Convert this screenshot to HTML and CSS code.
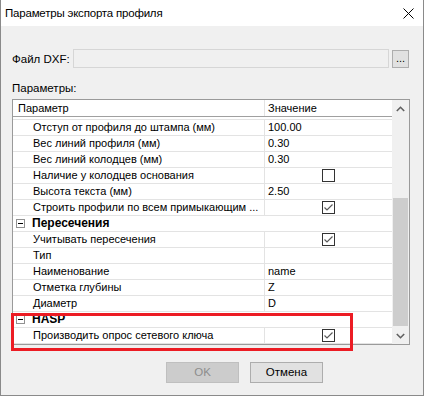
FILE: index.html
```html
<!DOCTYPE html>
<html>
<head>
<meta charset="utf-8">
<link rel="stylesheet" href="styles.css">
</head>
<body>
<div class="window">
  <div class="titlebar">
    <span class="title">Параметры экспорта профиля</span>
    <svg class="close" width="11" height="11" viewBox="0 0 11 11"><path d="M0.5 0.5 L10.5 10.5 M10.5 0.5 L0.5 10.5" stroke="#000" stroke-width="1" fill="none"/></svg>
  </div>
  <div class="content">
    <div class="file-row">
      <span class="file-label">Файл DXF:</span>
      <div class="file-input"></div>
      <div class="browse">...</div>
    </div>
    <div class="params-label">Параметры:</div>
    <div class="grid">
      <div class="grid-main">
        <div class="hdr">
          <div class="hdr-name">Параметр</div>
          <div class="hdr-val">Значение</div>
        </div>
        <div class="row"><div class="name">Отступ от профиля до штампа (мм)</div><div class="val">100.00</div></div>
        <div class="row"><div class="name">Вес линий профиля (мм)</div><div class="val">0.30</div></div>
        <div class="row"><div class="name">Вес линий колодцев (мм)</div><div class="val">0.30</div></div>
        <div class="row"><div class="name">Наличие у колодцев основания</div><div class="val center"><span class="cb"></span></div></div>
        <div class="row"><div class="name">Высота текста (мм)</div><div class="val">2.50</div></div>
        <div class="row"><div class="name">Строить профили по всем примыкающим ...</div><div class="val center"><span class="cb"><svg width="11" height="11" viewBox="0 0 11 11"><path d="M1.5 5.5 L4 8 L9.5 2.5" stroke="#5a5a5a" stroke-width="1.2" fill="none"/></svg></span></div></div>
        <div class="row cat"><span class="minus"></span><span class="cat-name">Пересечения</span></div>
        <div class="row"><div class="name">Учитывать пересечения</div><div class="val center"><span class="cb"><svg width="11" height="11" viewBox="0 0 11 11"><path d="M1.5 5.5 L4 8 L9.5 2.5" stroke="#5a5a5a" stroke-width="1.2" fill="none"/></svg></span></div></div>
        <div class="row"><div class="name">Тип</div><div class="val"></div></div>
        <div class="row"><div class="name">Наименование</div><div class="val">name</div></div>
        <div class="row"><div class="name">Отметка глубины</div><div class="val">Z</div></div>
        <div class="row"><div class="name">Диаметр</div><div class="val">D</div></div>
        <div class="row cat"><span class="minus"></span><span class="cat-name">HASP</span></div>
        <div class="row last"><div class="name">Производить опрос сетевого ключа</div><div class="val center"><span class="cb"><svg width="11" height="11" viewBox="0 0 11 11"><path d="M1.5 5.5 L4 8 L9.5 2.5" stroke="#5a5a5a" stroke-width="1.2" fill="none"/></svg></span></div></div>
      </div>
      <div class="vscroll">
        <div class="arrow"><svg width="9" height="6" viewBox="0 0 9 6"><path d="M0.8 5 L4.5 1.3 L8.2 5" stroke="#606060" stroke-width="1.6" fill="none"/></svg></div>
        <div class="track-top"></div>
        <div class="thumb"></div>
        <div class="track-rest"></div>
        <div class="arrow"><svg width="9" height="6" viewBox="0 0 9 6"><path d="M0.8 1 L4.5 4.7 L8.2 1" stroke="#606060" stroke-width="1.6" fill="none"/></svg></div>
      </div>
    </div>
    <div class="buttons">
      <div class="btn disabled">OK</div>
      <div class="btn">Отмена</div>
    </div>
  </div>
  <div class="highlight"></div>
</div>
</body>
</html>
```
FILE: styles.css
```css
* { box-sizing: border-box; }
html, body { margin: 0; padding: 0; }
body {
  font-family: "Liberation Sans", Arial, sans-serif;
  font-size: 11px;
  color: #000;
  background: #f0f0f0;
}
.window {
  position: relative;
  width: 424px;
  height: 396px;
  background: #f0f0f0;
  border-left: 1px solid #8a8a8a;
  border-right: 1px solid #8a8a8a;
  border-bottom: 1px solid #8a8a8a;
}
.titlebar {
  height: 26px;
  background: #fff;
  display: flex;
  align-items: center;
  padding-left: 4px;
}
.title { font-size: 11.5px; letter-spacing: -0.2px; }
.close { margin-left: auto; margin-right: 9px; margin-top: 1px; }
.content { padding-left: 11px; }
.file-row {
  margin-top: 23px;
  display: flex;
  align-items: center;
  height: 19px;
}
.file-label { width: 61px; font-size: 11.5px; }
.file-input {
  width: 316px;
  height: 19px;
  border: 1px solid #d6d6d6;
  background: #f0f0f0;
}
.browse {
  margin-left: 3px;
  width: 17px;
  height: 18px;
  margin-top: 1px;
  border: 1px solid #adadad;
  background: #e1e1e1;
  font-size: 11px;
  line-height: 14px;
  text-align: center;
}
.params-label {
  margin-top: 13px;
  height: 14px;
  line-height: 14px;
  font-size: 11.5px;
}
.grid {
  margin-top: 4px;
  width: 398px;
  height: 246px;
  border: 1px solid #9a9a9a;
  display: flex;
  background: #fff;
}
.grid-main { width: 379px; background: #fff; }
.hdr {
  height: 17px;
  border-bottom: 1px solid #a0a0a0;
  margin-bottom: 2px;
  display: flex;
  line-height: 16px;
}
.hdr-name { width: 252px; padding-left: 5px; border-right: 1px solid #e3e3e3; }
.hdr-val { padding-left: 3px; }
.row {
  height: 16px;
  border-top: 1px solid #e3e3e3;
  display: flex;
  line-height: 15px;
  white-space: nowrap;
}
.row.last { height: 17px; border-bottom: 1px solid #e3e3e3; }
.name {
  width: 252px;
  padding-left: 20px;
  border-right: 1px solid #e3e3e3;
  overflow: hidden;
}
.val { flex: 1; padding-left: 3px; }
.val.center { display: flex; justify-content: center; align-items: center; padding-left: 0; padding-right: 1px; }
.cb {
  width: 13px;
  height: 13px;
  border: 1px solid #333;
  background: #fff;
  display: flex;
  align-items: center;
  justify-content: center;
}
.cb svg { display: block; }
.cat { align-items: center; }
.minus {
  margin-left: 3px;
  width: 9px;
  height: 9px;
  border: 1px solid #919191;
  background: #fff;
  display: flex;
  align-items: center;
  justify-content: center;
}
.minus::after {
  content: "";
  width: 5px;
  height: 1px;
  background: #000;
}
.cat-name { margin-left: 7px; font-weight: bold; font-size: 12px; }
.vscroll {
  width: 17px;
  background: #f0f0f0;
  display: flex;
  flex-direction: column;
}
.arrow {
  height: 17px;
  display: flex;
  align-items: center;
  justify-content: center;
}
.track-top { height: 81px; }
.thumb { height: 128px; margin: 0 1px; background: #cdcdcd; }
.track-rest { flex: 1; }
.buttons {
  margin-top: 17px;
  margin-left: 154px;
  display: flex;
  gap: 11px;
}
.btn {
  width: 73px;
  height: 21px;
  border: 1px solid #adadad;
  background: #e1e1e1;
  text-align: center;
  line-height: 19px;
  font-size: 11.5px;
}
.btn.disabled {
  background: #cccccc;
  border-color: #bfbfbf;
  color: #8d8d8d;
}
.highlight {
  position: absolute;
  left: 10px;
  top: 313px;
  width: 342px;
  height: 38px;
  border: 3px solid #ec1c24;
}
```
